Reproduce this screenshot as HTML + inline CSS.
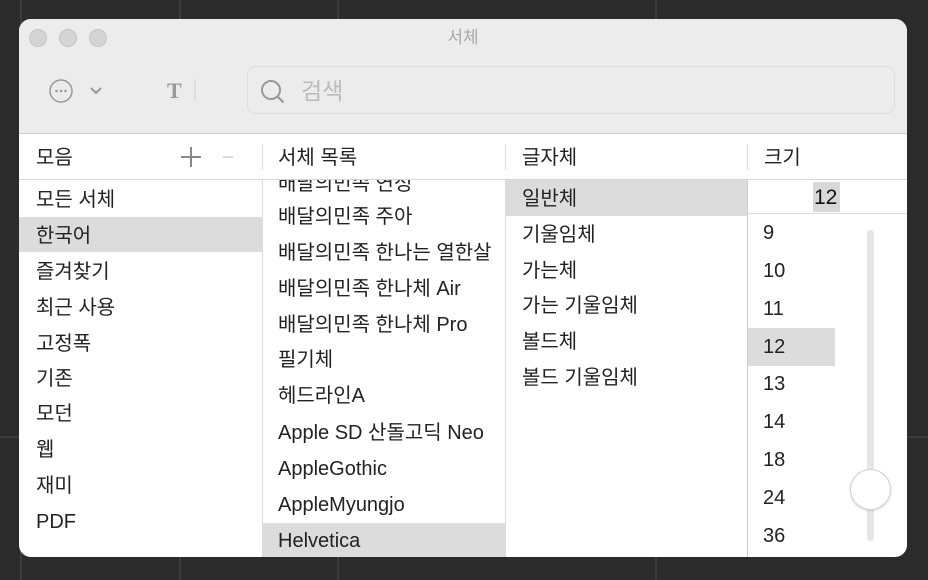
<!DOCTYPE html>
<html><head><meta charset="utf-8"><style>
*{margin:0;padding:0;box-sizing:border-box}
body{width:928px;height:580px;background:#2b2b2b;position:relative;overflow:hidden;font-family:"Liberation Sans","Noto Sans CJK KR",sans-serif;color:#222}
.gl{position:absolute;background:#3c3c3c}
.win{position:absolute;left:19px;top:19px;width:888px;height:538px;background:#fff;border-radius:12px;overflow:hidden}
.tb{position:absolute;left:0;top:0;width:888px;height:115px;background:#ececec;border-bottom:1px solid #cfcfcf}
.dot{position:absolute;top:10px;width:18px;height:18px;border-radius:50%;background:#d4d4d4;border:1px solid #c4c4c4}
.a{position:absolute;white-space:nowrap;font-size:20px;line-height:36px;margin-top:2px}
.sel{position:absolute;background:#dcdcdc}
.vd{position:absolute;width:1px;background:#dcdcdc}
</style></head><body>
<div class="gl" style="left:20px;top:0;width:2px;height:580px"></div>
<div class="gl" style="left:179px;top:0;width:2px;height:580px"></div>
<div class="gl" style="left:337px;top:0;width:2px;height:580px"></div>
<div class="gl" style="left:655px;top:0;width:2px;height:580px"></div>
<div class="gl" style="left:0;top:436px;width:928px;height:2px"></div>
<div class="win">
 <div class="tb">
  <div class="dot" style="left:10px"></div><div class="dot" style="left:40px"></div><div class="dot" style="left:70px"></div>
  <div class="a" style="left:0;width:888px;text-align:center;top:-1px;font-size:17px;line-height:36px;color:#a8a8a8">서체</div>
  <svg style="position:absolute;left:29px;top:59px" width="60" height="26"><circle cx="13" cy="13" r="11" fill="none" stroke="#999" stroke-width="1.5"/><circle cx="8.5" cy="13" r="1.3" fill="#999"/><circle cx="13" cy="13" r="1.3" fill="#999"/><circle cx="17.5" cy="13" r="1.3" fill="#999"/><path d="M43 10l5 5 5-5" fill="none" stroke="#999" stroke-width="2"/></svg>
  <div class="a" style="left:148px;top:52px;font-family:'Liberation Serif',serif;font-weight:bold;font-size:22px;color:#999">T</div>
  <div style="position:absolute;left:175px;top:60px;width:2px;height:22px;background:#ddd"></div>
  <div style="position:absolute;left:228px;top:47px;width:648px;height:48px;border:1px solid #dedede;border-radius:9px;background:#ececec"></div>
  <svg style="position:absolute;left:240px;top:59px" width="30" height="30"><circle cx="12" cy="12" r="9" fill="none" stroke="#999" stroke-width="2"/><path d="M18.5 18.5l6 6" stroke="#999" stroke-width="2.2"/></svg>
  <div class="a" style="left:282px;top:52px;font-size:23px;color:#bbb">검색</div>
 </div>
 <div style="position:absolute;left:0;top:160px;width:888px;height:1px;background:#d4d4d4"></div>
 <div class="a" style="left:17px;top:119px">모음</div>
 <svg style="position:absolute;left:160px;top:127px" width="60" height="22"><path d="M12 1v20M2 11h20" stroke="#888" stroke-width="2"/><path d="M44 11h10" stroke="#ccc" stroke-width="1.5"/></svg>
 <div class="a" style="left:259px;top:119px">서체 목록</div>
 <div class="a" style="left:503px;top:119px">글자체</div>
 <div class="a" style="left:745px;top:119px">크기</div>
 <div class="vd" style="left:243px;top:125px;height:26px"></div>
 <div class="vd" style="left:486px;top:125px;height:26px"></div>
 <div class="vd" style="left:728px;top:125px;height:26px"></div>
 <div class="vd" style="left:243px;top:161px;height:380px"></div>
 <div class="vd" style="left:486px;top:161px;height:380px"></div>
 <div class="vd" style="left:728px;top:161px;height:380px;background:#ccc"></div>
 <div class="sel" style="left:0;top:198px;width:243px;height:35px"></div>
 <div class="a" style="left:17px;top:161px">모든 서체</div>
 <div class="a" style="left:17px;top:197px">한국어</div>
 <div class="a" style="left:17px;top:233px">즐겨찾기</div>
 <div class="a" style="left:17px;top:269px">최근 사용</div>
 <div class="a" style="left:17px;top:305px">고정폭</div>
 <div class="a" style="left:17px;top:340px">기존</div>
 <div class="a" style="left:17px;top:375px">모던</div>
 <div class="a" style="left:17px;top:411px">웹</div>
 <div class="a" style="left:17px;top:447px">재미</div>
 <div class="a" style="left:17px;top:483px">PDF</div>
 <div style="position:absolute;left:244px;top:161px;width:242px;height:380px;overflow:hidden">
  <div class="sel" style="left:0;top:343px;width:242px;height:36px"></div>
  <div class="a" style="left:15px;top:-16px">배달의민족 연성</div>
  <div class="a" style="left:15px;top:17px">배달의민족 주아</div>
  <div class="a" style="left:15px;top:53px">배달의민족 한나는 열한살</div>
  <div class="a" style="left:15px;top:89px">배달의민족 한나체 Air</div>
  <div class="a" style="left:15px;top:125px">배달의민족 한나체 Pro</div>
  <div class="a" style="left:15px;top:160px">필기체</div>
  <div class="a" style="left:15px;top:196px">헤드라인A</div>
  <div class="a" style="left:15px;top:233px">Apple SD 산돌고딕 Neo</div>
  <div class="a" style="left:15px;top:269px">AppleGothic</div>
  <div class="a" style="left:15px;top:305px">AppleMyungjo</div>
  <div class="a" style="left:15px;top:341px">Helvetica</div>
 </div>
 <div class="sel" style="left:487px;top:161px;width:241px;height:36px"></div>
 <div class="a" style="left:503px;top:160px">일반체</div>
 <div class="a" style="left:503px;top:196px">기울임체</div>
 <div class="a" style="left:503px;top:232px">가는체</div>
 <div class="a" style="left:503px;top:267px">가는 기울임체</div>
 <div class="a" style="left:503px;top:303px">볼드체</div>
 <div class="a" style="left:503px;top:339px">볼드 기울임체</div>
 <div style="position:absolute;left:729px;top:194px;width:159px;height:1px;background:#ddd"></div>
 <div style="position:absolute;left:794px;top:163px;width:27px;height:30px;background:#d8d8d8"></div>
 <div class="a" style="left:795px;top:159px;font-size:21px;color:#111">12</div>
 <div class="sel" style="left:729px;top:309px;width:87px;height:38px"></div>
 <div class="a" style="left:744px;top:194px">9</div>
 <div class="a" style="left:744px;top:232px">10</div>
 <div class="a" style="left:744px;top:270px">11</div>
 <div class="a" style="left:744px;top:308px">12</div>
 <div class="a" style="left:744px;top:345px">13</div>
 <div class="a" style="left:744px;top:383px">14</div>
 <div class="a" style="left:744px;top:421px">18</div>
 <div class="a" style="left:744px;top:459px">24</div>
 <div class="a" style="left:744px;top:497px">36</div>
 <div style="position:absolute;left:848px;top:211px;width:7px;height:311px;border-radius:4px;background:#e6e6e6"></div>
 <div style="position:absolute;left:831px;top:450px;width:41px;height:41px;border-radius:50%;background:#fff;border:1px solid #d0d0d0;box-shadow:0 1px 2px rgba(0,0,0,.15)"></div>
</div>
</body></html>
